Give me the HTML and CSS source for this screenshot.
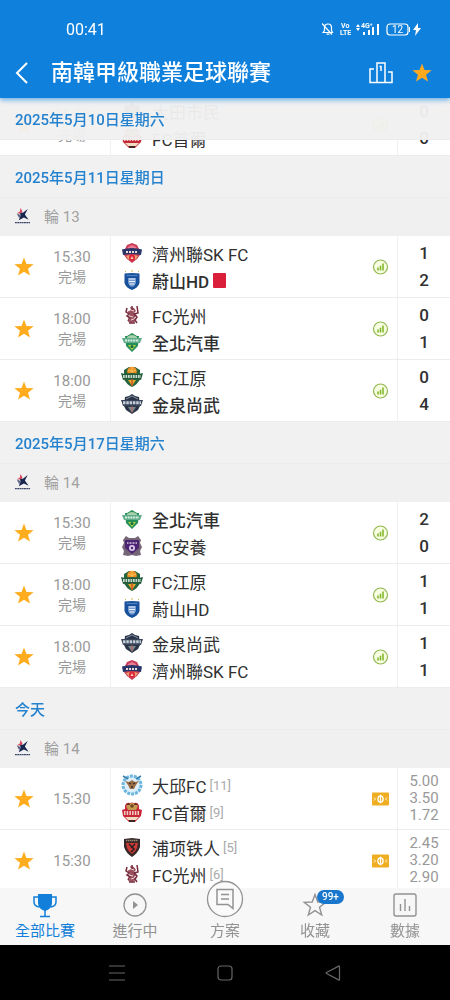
FILE: index.html
```html
<!DOCTYPE html>
<html lang="zh-Hant">
<head>
    <meta charset="UTF-8">
    <meta name="viewport" content="width=device-width, initial-scale=1.0">
    <title>南韓甲級職業足球聯賽</title>
    <link rel="stylesheet" href="styles.css">
</head>
<body>
    <svg class="sprite" aria-hidden="true">
        <symbol id="star" viewBox="0 0 24 24">
            <path d="M12 1.500l2.700 7.300 7.800.3-6.100 4.800 2.100 7.500L12 17.100l-6.500 4.300 2.100-7.500L1.500 9.100l7.800-.3z" fill="currentColor"/>
        </symbol>
        <symbol id="stats" viewBox="0 0 16 16">
            <circle cx="8" cy="8" r="7" fill="#f6fde0" stroke="#92b853" stroke-width="1.200"/>
            <path d="M5.500 8.500v3M8 6.800v4.700M10.500 4.500v7" stroke="#84b82e" stroke-width="1.600"/>
        </symbol>
        <symbol id="ticket" viewBox="0 0 17 13">
            <rect width="17" height="13" rx="1" fill="#efad22"/>
            <path d="M8.500 2.200v8.600" stroke="#fff" stroke-width="1.300"/>
            <ellipse cx="8.500" cy="6.500" rx="2.600" ry="3.200" fill="none" stroke="#fff" stroke-width="1.300"/>
            <path d="M2 5l1.500 1.500L2 8M15 5l-1.500 1.500L15 8" fill="none" stroke="#fff8df"/>
        </symbol>
        <symbol id="kleague" viewBox="0 0 18 18">
            <path d="M6 5.500l3.500.5L14.500 2l-3 6 4 5.500-5-2.500L5 14l2-5z" fill="#17254f"/>
            <path d="M7 1l2 4-2.500 2L3 6.500l3-1.500z" fill="#d8475c"/>
            <path d="M3 7l4 1.500L5.500 12z" fill="#5a6080"/>
            <path d="M1 16.500h16" stroke="#3c476b" stroke-width="1.500" stroke-dasharray="2 .4"/>
        </symbol>
        <symbol id="daejeon" viewBox="0 0 22 22">
            <path d="M11 1l2 4 6 1-1 9-7 6-7-6-1-9 6-1z" fill="#7b3b50"/>
            <path d="M7 9h8l-1 5-3 3-3-3z" fill="#3d8b6f"/>
        </symbol>
        <symbol id="jeju" viewBox="0 0 22 22">
            <path d="M11 1l5 2 2 4 2 1-1 5-3 4-5 4-5-4-3-4-1-5 2-1 2-4z" fill="#c83c57"/>
            <path d="M11 3l4 2 1 3H6l1-3z" fill="#ef7a93"/>
            <path d="M1 7.500q10-3 20 0l-1 5.500q-9-2-18 0z" fill="#283568"/>
            <path d="M5 10h12" stroke="#eed9db" stroke-width="2" stroke-dasharray="2 1"/>
            <path d="M5 14l4-1-1 5zM17 14l-4-1 1 5z" fill="#e9a56d"/>
            <circle cx="11" cy="15.500" r="3" fill="#df2439"/>
            <path d="M9.500 17l1.500-3 1.500 3z" fill="#f5c6b8"/>
        </symbol>
        <symbol id="ulsan" viewBox="0 0 22 22">
            <path d="M4 2l1 1M18 2l-1 1M11 1v2" stroke="#d9b84c"/>
            <path d="M3.500 4.500q7.500-1 15 0V14q-1.500 5-7.500 7-6-2-7.500-7z" fill="#17509c"/>
            <path d="M7 9h8v5q-1 3-4 4-3-1-4-4z" fill="#759bce"/>
            <path d="M8 10h6M8 12.500h6M8.500 15h5" stroke="#e9f2ff" stroke-width="1.200"/>
            <path d="M5.500 6.500h11" stroke="#4f82bd" stroke-width="1.200"/>
        </symbol>
        <symbol id="gwangju" viewBox="0 0 22 22">
            <path d="M9 3l4 1 2 3-3 3 4 1-3 3 2 3-4 2-4-1 2-3-3-2 3-2-3-3 4-2z" fill="#9b5260"/>
            <path d="M6 4l-1 4 3 2-2 2 3 1-2 4M16 2l1 7-4 1 3 3-2 3 2 3M11 2v4M8 19h6" fill="none" stroke="#762c3d" stroke-width="1.500"/>
            <path d="M10 6l3 1M8 12l4 1M10 16l3-1" stroke="#eed4d1"/>
        </symbol>
        <symbol id="jeonbuk" viewBox="0 0 22 22">
            <path d="M11 2l5 3h2l-1 10-6 6-6-6L4 5h2z" fill="#258f58"/>
            <path d="M6 6q5-4 10 0v2H6z" fill="#a9cfab"/>
            <path d="M1 7h20l-2 5H3z" fill="#5eac89"/>
            <path d="M4 9.500h14" stroke="#d9eee2" stroke-width="2" stroke-dasharray="2 .7"/>
            <path d="M7 14h8l-4 5z" fill="#add14c"/>
            <circle cx="11" cy="15.500" r="1.500" fill="#116b3b"/>
        </symbol>
        <symbol id="gangwon" viewBox="0 0 22 22">
            <path d="M3 4l5-3h6l5 3v9q-2 5-8 8-6-3-8-8z" fill="#25643d"/>
            <circle cx="11" cy="5.500" r="4.800" fill="#ed8f25"/>
            <path d="M7 4q4 3 8 0M11 1v8" stroke="#f8c35a" fill="none"/>
            <path d="M0 7l4 1q7-2 14 0l4-1-2 7-4-1H6l-4 1z" fill="#205a3b"/>
            <path d="M2 10.500h18" stroke="#c9d8ca" stroke-width="3" stroke-dasharray="1.700 .8"/>
            <path d="M7 14h8l-4 6z" fill="#e6a72f"/>
            <path d="M11 13v7" stroke="#c85425" stroke-width="1.500"/>
        </symbol>
        <symbol id="gimcheon" viewBox="0 0 22 22">
            <path d="M11 1l3 2 4 1 1 9-2 4-6 4-6-4-2-4 1-9 4-1z" fill="#2b3446"/>
            <path d="M5 6l6-3 6 3" fill="none" stroke="#7f95a8"/>
            <path d="M0 7h22l-2 6H2z" fill="#37445a"/>
            <path d="M2 9.800h18" stroke="#c5ced8" stroke-width="3" stroke-dasharray="2.500 .8"/>
            <path d="M7 14l4 6 4-6z" fill="#7c8790"/>
            <path d="M11 13v6" stroke="#b76151"/>
        </symbol>
        <symbol id="anyang" viewBox="0 0 22 22">
            <path d="M5 1l3 2h6l3-2 3 4-1 3 2 4-2 4 1 4-5 1-4-1-4 1-5-1 1-4-2-4 2-4-1-3z" fill="#756677"/>
            <path d="M4 5h14v8l-7 6-7-6z" fill="#4c2473"/>
            <path d="M6 8h10" stroke="#d3c5df" stroke-width="1.500" stroke-dasharray="1 .5"/>
            <circle cx="11" cy="13" r="3" fill="#d9c9eb"/>
            <circle cx="11" cy="13" r="1.200" fill="#4c2473"/>
        </symbol>
        <symbol id="daegu" viewBox="0 0 22 22">
            <circle cx="11" cy="11" r="9" fill="#dceffb" stroke="#6bb5df" stroke-width="3" stroke-dasharray="3 1"/>
            <path d="M2 2l5 3M20 2l-5 3" stroke="#397ea8" stroke-width="1.500"/>
            <path d="M4 7l4 1 3-2 3 2 4-1-3 4-2 4h-4l-2-4z" fill="#9b7046"/>
            <path d="M8 9l2 1M14 9l-2 1M10 13h2" stroke="#392d29" stroke-width="1.300"/>
        </symbol>
        <symbol id="seoul" viewBox="0 0 22 22">
            <path d="M4 5q1-4 5-3 2-1 4 0 4-1 5 3v3l3 1-1 6-4 4-2 2H8l-2-2-4-4-1-6 3-1z" fill="#c6283a"/>
            <path d="M5 5q6-6 12 0l-2 4H7z" fill="#c59a53"/>
            <path d="M5 4l3-2 1 2zM17 4l-3-2-1 2z" fill="#51311c"/>
            <circle cx="11" cy="5" r="1.800" fill="#6e451f"/>
            <path d="M3 12h16" stroke="#f4cec4" stroke-width="4" stroke-dasharray="1.500 1.200"/>
            <path d="M4 16h14l-3 3H7z" fill="#f0dcc0"/>
            <path d="M8 20h6" stroke="#432427" stroke-width="2"/>
        </symbol>
        <symbol id="pohang" viewBox="0 0 22 22">
            <path d="M3 3l8-1 8 1v8q-2 6-8 10-6-4-8-10z" fill="#352827"/>
            <path d="M5 4.500h12" stroke="#9d8970" stroke-width="1.500" stroke-dasharray="1.500 .5"/>
            <path d="M5 7h12l-1 5q-1 3-5 6-4-3-5-6z" fill="#cb3c38"/>
            <path d="M8 8l5 5-3 3M14 8l-4 4" fill="none" stroke="#271e20" stroke-width="1.500"/>
        </symbol>
    </svg>

    <header class="app-header">
        <div class="status-bar">
            <span>00:41</span>
            <svg class="status-icons" viewBox="0 0 100 16" aria-hidden="true">
                <g fill="none" stroke="#fff" stroke-width="1.200">
                    <path d="M1 11.500l1.500-2V6.500a3.500 3.500 0 0 1 7 0v3l1 2zM4.500 13.200h3M0 2.500l10 11"/>
                    <rect x="65" y="3" width="21" height="11" rx="3"/>
                </g>
                <g fill="#fff">
                    <text class="tiny-label" x="19" y="7">Vo</text>
                    <text class="tiny-label" x="18" y="14">LTE</text>
                    <path d="M34 6l2-3 2 3zM34 7l2 3 2-3z"/>
                    <text class="tiny-label" x="39" y="7">4G⁺</text>
                    <path d="M41 11h2v3h-2zM46 9h2v5h-2zM50 6h2v8h-2zM55 3h2v11h-2z"/>
                    <path d="M87 6h1v5h-1z"/>
                    <text class="battery-label" x="70" y="12">12</text>
                    <path d="M96 2l-5 7h3l-1 6 6-8h-3z"/>
                </g>
            </svg>
        </div>
        <div class="title-bar">
            <a class="back" href="#" aria-label="返回">
                <svg viewBox="0 0 14 22"><path d="M12 1L2 11l10 10" fill="none" stroke="currentColor" stroke-width="2"/></svg>
            </a>
            <h1>南韓甲級職業足球聯賽</h1>
            <button class="icon-button" aria-label="積分榜">
                <svg viewBox="0 0 24 22"><path d="M8 20.500H1V7h4M8 20.500V1h8v19.500zM16 20.500h7V10h-4M10.500 4.500h1.500V9" fill="none" stroke="currentColor" stroke-width="1.500"/></svg>
            </button>
            <button class="icon-button favourite" aria-label="收藏聯賽"><svg viewBox="0 0 24 24"><use href="#star"/></svg></button>
        </div>
    </header>

    <main class="fixtures" id="fixtures"></main>

    <nav class="tab-bar">
        <a class="tab active" href="#">
            <svg viewBox="0 0 26 26"><path d="M6 2h14v9q0 6-7 8-7-2-7-8z" fill="currentColor"/><path d="M6 5H2v5q0 4 5 5M20 5h4v5q0 4-5 5M13 18v6M8 24.500h10" fill="none" stroke="currentColor" stroke-width="1.500"/></svg>
            <span>全部比賽</span>
        </a>
        <a class="tab" href="#">
            <svg viewBox="0 0 26 26"><circle cx="13" cy="13" r="11" fill="none" stroke="currentColor" stroke-width="1.300"/><path d="M11 9l5 4-5 4z" fill="currentColor"/></svg>
            <span>進行中</span>
        </a>
        <a class="tab plan" href="#">
            <svg viewBox="0 0 38 38"><circle cx="19" cy="19" r="17.500" fill="#fafafa" stroke="currentColor" stroke-width="1.300"/><path d="M11 9.500h16v19l-5-4H11zM15 14.500h8M15 19h8" fill="none" stroke="currentColor" stroke-width="1.500"/></svg>
            <span>方案</span>
        </a>
        <a class="tab" href="#">
            <svg viewBox="0 0 26 26"><path d="M13 2.500l2.800 7.500 8 .3-6.300 5 2.200 7.700-6.700-4.400L6.300 23l2.200-7.700-6.300-5 8-.3z" fill="none" stroke="currentColor" stroke-width="1.400"/></svg>
            <b class="badge">99+</b>
            <span>收藏</span>
        </a>
        <a class="tab" href="#">
            <svg viewBox="0 0 26 26"><rect x="2" y="2" width="22" height="22" rx="2" fill="none" stroke="currentColor" stroke-width="1.400"/><path d="M8.500 12v7M13 7v12M17.500 14v5" stroke="currentColor" stroke-width="1.400"/></svg>
            <span>數據</span>
        </a>
    </nav>

    <footer class="system-bar">
        <button aria-label="最近使用"><svg viewBox="0 0 18 18"><path d="M1 2h16M1 9h16M1 16h16"/></svg></button>
        <button aria-label="主畫面"><svg viewBox="0 0 18 18"><rect x="2" y="2" width="14" height="14" rx="3"/></svg></button>
        <button aria-label="返回上頁"><svg viewBox="0 0 18 18"><path d="M15.500 2.500v13q0 .8-.8.400L2.500 9.500q-.8-.5 0-1l12.200-6.400q.8-.4.800.400z"/></svg></button>
    </footer>

    <script src="script.js"></script>
</body>
</html>
```
FILE: styles.css
```css
*,::before,::after {
    box-sizing: border-box;
}
body {
    display: flex;
    flex-direction: column;
    height: 100vh;
    margin: 0;
    overflow: hidden;
    font-family: Roboto, "Noto Sans CJK TC", sans-serif;
    font-size: 15px;
    color: #303030;
    background-color: #fff;
}
h1, h2, h3, ul {
    margin: 0;
    padding: 0;
}
ul {
    list-style: none;
}
a {
    color: inherit;
    text-decoration: none;
}
button {
    padding: 0;
    border: none;
    background: none;
    color: inherit;
    cursor: pointer;
}
svg {
    display: block;
    flex: none;
}
.sprite {
    display: none;
}

/* Header */
.app-header {
    position: relative;
    z-index: 3;
    flex: none;
    color: #fff;
    background-color: #0f80dc;
    box-shadow: 0 2px 5px rgba(15, 128, 220, .6);
}
.status-bar {
    display: flex;
    align-items: center;
    justify-content: space-between;
    height: 48px;
    padding: 10px 28px 0 66px;
    font-size: 16px;
}
.status-icons {
    width: 100px;
    height: 16px;
}
.tiny-label {
    font-size: 7px;
    font-weight: 700;
}
.battery-label {
    font-size: 10px;
}
.title-bar {
    display: flex;
    align-items: center;
    height: 50px;
    padding: 0 16px 0 15px;
}
.back svg {
    width: 14px;
    height: 22px;
}
h1 {
    flex: 1;
    margin-left: 22px;
    font-size: 22px;
    font-weight: 500;
    line-height: 32px;
    white-space: nowrap;
}
.icon-button svg {
    width: 24px;
    height: 22px;
}
.favourite {
    margin-left: 17px;
    color: #ffa91f;
}

/* Fixture list */
.fixtures {
    flex: 1;
    min-height: 0;
    overflow-y: auto;
    scrollbar-width: none;
}
.day-title {
    position: sticky;
    top: 0;
    z-index: 2;
    height: 42px;
    padding: 2px 15px 0;
    border-bottom: 1px solid #ebebeb;
    background-color: rgba(240, 240, 240, .96);
    color: #2482ce;
    font-size: 15px;
    font-weight: 500;
    line-height: 40px;
}
.round {
    display: flex;
    align-items: center;
    gap: 13px;
    height: 38px;
    padding: 0 14px 3px;
    background-color: #f0f0f0;
    color: #a0a0a0;
    font-size: 15px;
    font-weight: 400;
}
.round svg {
    width: 17px;
    height: 17px;
}
.match {
    display: grid;
    grid-template-columns: 48px 62px 1fr 34px 53px;
    height: 62px;
    border-bottom: 1px solid #ececec;
}
.match > * {
    display: flex;
    flex-direction: column;
    justify-content: center;
    align-items: center;
}
.star {
    color: #ffad1f;
}
.star svg {
    width: 22px;
    height: 22px;
}
.kickoff {
    padding-right: 14px;
    color: #999;
    line-height: 20px;
}
.state {
    font-size: 14px;
}
.match .teams {
    align-items: stretch;
    padding-left: 10px;
    border-left: 1px solid #f0f0f0;
}
.team {
    display: flex;
    align-items: center;
    height: 27px;
    font-size: 17px;
    white-space: nowrap;
}
.team svg {
    width: 22px;
    height: 22px;
    margin-right: 9px;
}
.winner {
    font-weight: 500;
}
.rank {
    margin-left: 3px;
    color: #aaa;
    font-size: 13px;
}
.red-card {
    width: 13px;
    height: 15px;
    margin-left: 4px;
    border-radius: 1px;
    background-color: #d91f3a;
}
.info svg {
    width: 17px;
    height: 16px;
}
.match .score {
    border-left: 1px solid #f0f0f0;
    font-size: 17px;
    font-weight: 500;
    line-height: 27px;
}
.match .odds {
    border-left: 1px solid #f0f0f0;
    color: #999;
    line-height: 17px;
}

/* Bottom tabs */
.tab-bar {
    position: relative;
    z-index: 3;
    display: flex;
    flex: none;
    height: 57px;
    background-color: #f7f7f7;
    color: #929292;
}
.tab {
    position: relative;
    flex: 1;
    display: flex;
    flex-direction: column;
    align-items: center;
    justify-content: flex-end;
    gap: 2px;
    padding-bottom: 3px;
    font-size: 15px;
    line-height: 22px;
}
.tab svg {
    width: 26px;
    height: 26px;
}
.tab.active {
    color: #1280da;
}
.tab.plan svg {
    width: 38px;
    height: 38px;
}
.badge {
    position: absolute;
    top: 2px;
    left: 50%;
    margin-left: 2px;
    padding: 0 5px;
    border-radius: 7px;
    background-color: #1877cc;
    color: #fff;
    font-size: 10px;
    font-weight: 500;
    line-height: 14px;
}

.system-bar {
    display: flex;
    flex: none;
    align-items: center;
    justify-content: space-evenly;
    height: 55px;
    padding: 0 18px;
    background-color: #000;
}
.system-bar svg {
    width: 18px;
    height: 18px;
    fill: none;
    stroke: #666;
    stroke-width: 1.2;
}
```
FILE: script.js
```js
const days = [
    {
        date: "2025年5月10日星期六", round: 13,
        matches: [
            { time: "15:30", home: ["daejeon", "大田市民"], away: ["seoul", "FC首爾"], score: [0, 0] }
        ]
    },
    {
        date: "2025年5月11日星期日", round: 13,
        matches: [
            { time: "15:30", home: ["jeju", "濟州聯SK FC"], away: ["ulsan", "蔚山HD"], score: [1, 2], redCard: true },
            { time: "18:00", home: ["gwangju", "FC光州"], away: ["jeonbuk", "全北汽車"], score: [0, 1] },
            { time: "18:00", home: ["gangwon", "FC江原"], away: ["gimcheon", "金泉尚武"], score: [0, 4] }
        ]
    },
    {
        date: "2025年5月17日星期六", round: 14,
        matches: [
            { time: "15:30", home: ["jeonbuk", "全北汽車"], away: ["anyang", "FC安養"], score: [2, 0] },
            { time: "18:00", home: ["gangwon", "FC江原"], away: ["ulsan", "蔚山HD"], score: [1, 1] },
            { time: "18:00", home: ["gimcheon", "金泉尚武"], away: ["jeju", "濟州聯SK FC"], score: [1, 1] }
        ]
    },
    {
        date: "今天", round: 14,
        matches: [
            { time: "15:30", home: ["daegu", "大邱FC", 11], away: ["seoul", "FC首爾", 9], odds: ["5.00", "3.50", "1.72"] },
            { time: "15:30", home: ["pohang", "浦项铁人", 5], away: ["gwangju", "FC光州", 6], odds: ["2.45", "3.20", "2.90"] }
        ]
    }
];

function icon(name) {
    return `<svg aria-hidden="true"><use href="#${name}"/></svg>`;
}

function teamRow(team, isWinner, redCard) {
    const [logo, name, rank] = team;
    return `<div class="team">${icon(logo)}
                <span class="${isWinner ? "winner" : ""}">${name}</span>
                ${rank ? `<span class="rank">[${rank}]</span>` : ""}
                ${redCard ? `<span class="red-card"></span>` : ""}
            </div>`;
}

function matchRow(match) {
    const { time, home, away, score, odds, redCard } = match;
    const result = score
        ? `<div class="score"><span>${score[0]}</span><span>${score[1]}</span></div>`
        : `<div class="odds">${odds.map(odd => `<span>${odd}</span>`).join("")}</div>`;
    return `<li class="match">
                <button class="star" aria-label="收藏">${icon("star")}</button>
                <div class="kickoff"><span>${time}</span>${score ? `<span class="state">完場</span>` : ""}</div>
                <div class="teams">
                    ${teamRow(home, score && score[0] > score[1])}
                    ${teamRow(away, score && score[1] > score[0], redCard)}
                </div>
                <div class="info">${icon(score ? "stats" : "ticket")}</div>
                ${result}
            </li>`;
}

const fixtures = document.getElementById("fixtures");

fixtures.innerHTML = days.map(day => `
    <section>
        <h2 class="day-title">${day.date}</h2>
        <h3 class="round">${icon("kleague")}輪 ${day.round}</h3>
        <ul>${day.matches.map(matchRow).join("")}</ul>
    </section>`).join("");

// open on the last match of the first day, under its pinned date
fixtures.scrollTop = 84;
```
